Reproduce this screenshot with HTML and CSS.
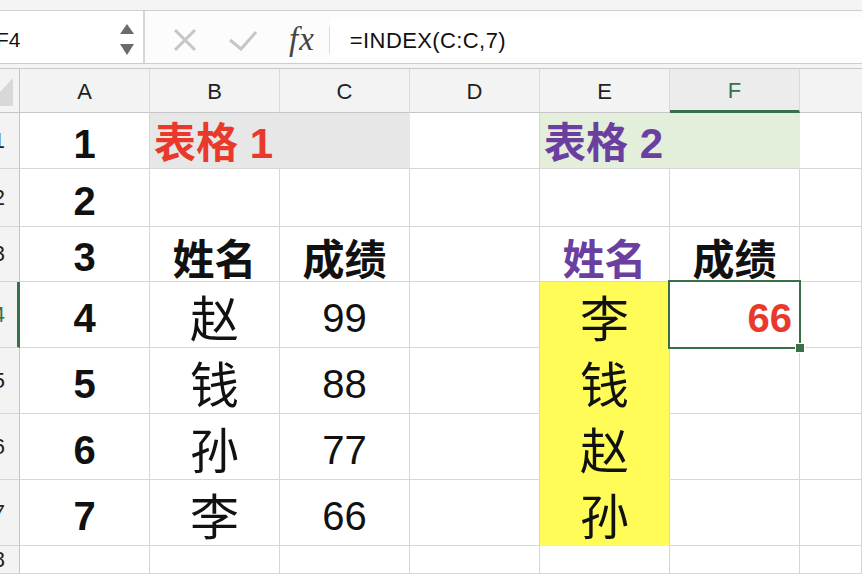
FILE: index.html
```html
<!DOCTYPE html>
<html lang="zh-cn">
<head>
    <meta charset="UTF-8">
    <meta name="viewport" content="width=device-width, initial-scale=1.0">
    <title>INDEX 示例</title>
    <link rel="stylesheet" href="styles.css">
</head>
<body>
    <div class="toolbar-strip"></div>

    <div class="formula-bar">
        <div class="name-box">
            <span class="cell-ref">F4</span>
            <svg class="spinner" width="16" height="33" viewBox="0 0 16 33">
                <polygon points="1,11 8,1 15,11" fill="#6b6b6b"/>
                <polygon points="1,21 15,21 8,32" fill="#6b6b6b"/>
            </svg>
        </div>
        <div class="fb-tools">
            <svg class="icon-cancel" width="24" height="22" viewBox="0 0 24 22">
                <path d="M2 1 L22 21 M22 1 L2 21" stroke="#c6c6c6" stroke-width="3" fill="none"/>
            </svg>
            <svg class="icon-enter" width="30" height="22" viewBox="0 0 30 22">
                <path d="M2 11 L13 20 L28 3" stroke="#c6c6c6" stroke-width="3" fill="none"/>
            </svg>
            <span class="fx">fx</span>
            <span class="fb-sep"></span>
        </div>
        <div class="formula">=INDEX(C:C,7)</div>
    </div>
    <div class="bar-gap"></div>

    <div class="sheet">
        <!-- cabeçalho de colunas -->
        <div class="corner">
            <svg width="19" height="43" viewBox="0 0 19 43">
                <polygon points="13,9 13,37 0,37 0,23" fill="#d8d8d8"/>
            </svg>
        </div>
        <div class="ch">A</div>
        <div class="ch">B</div>
        <div class="ch">C</div>
        <div class="ch">D</div>
        <div class="ch">E</div>
        <div class="ch ch-active">F</div>
        <div class="ch ch-last"></div>

        <!-- linha 1 -->
        <div class="rh"><span>1</span></div>
        <div class="c num">1</div>
        <div class="c span2 fill-gray title red">表格 1</div>
        <div class="c"></div>
        <div class="c span2 fill-green title purple">表格 2</div>
        <div class="c"></div>

        <!-- linha 2 -->
        <div class="rh"><span>2</span></div>
        <div class="c num">2</div>
        <div class="c"></div>
        <div class="c"></div>
        <div class="c"></div>
        <div class="c"></div>
        <div class="c"></div>
        <div class="c"></div>

        <!-- linha 3 -->
        <div class="rh"><span>3</span></div>
        <div class="c num">3</div>
        <div class="c head">姓名</div>
        <div class="c head">成绩</div>
        <div class="c"></div>
        <div class="c head purple">姓名</div>
        <div class="c head">成绩</div>
        <div class="c"></div>

        <!-- linha 4 -->
        <div class="rh rh-active"><span>4</span></div>
        <div class="c num">4</div>
        <div class="c name">赵</div>
        <div class="c score">99</div>
        <div class="c"></div>
        <div class="c name fill-yellow">李</div>
        <div class="c result selected">66</div>
        <div class="c"></div>

        <!-- linha 5 -->
        <div class="rh"><span>5</span></div>
        <div class="c num">5</div>
        <div class="c name">钱</div>
        <div class="c score">88</div>
        <div class="c"></div>
        <div class="c name fill-yellow">钱</div>
        <div class="c"></div>
        <div class="c"></div>

        <!-- linha 6 -->
        <div class="rh"><span>6</span></div>
        <div class="c num">6</div>
        <div class="c name">孙</div>
        <div class="c score">77</div>
        <div class="c"></div>
        <div class="c name fill-yellow">赵</div>
        <div class="c"></div>
        <div class="c"></div>

        <!-- linha 7 -->
        <div class="rh"><span>7</span></div>
        <div class="c num">7</div>
        <div class="c name">李</div>
        <div class="c score">66</div>
        <div class="c"></div>
        <div class="c name fill-yellow">孙</div>
        <div class="c"></div>
        <div class="c"></div>

        <!-- linha 8 -->
        <div class="rh"><span>8</span></div>
        <div class="c"></div>
        <div class="c"></div>
        <div class="c"></div>
        <div class="c"></div>
        <div class="c"></div>
        <div class="c"></div>
        <div class="c"></div>
    </div>
</body>
</html>
```

FILE: styles.css
```css
* {
    box-sizing: border-box;
}
body {
    margin: 0;
    padding: 0;
    background-color: #fff;
    font-family: "Liberation Sans", "Noto Sans CJK SC", sans-serif;
    color: #111;
    overflow: hidden;
}
.toolbar-strip {
    height: 11px;
    background-color: #f4f4f4;
    border-bottom: 1px solid #cfcfcf;
}
.formula-bar {
    display: flex;
    height: 53px;
    background-color: #fcfcfc;
    border-bottom: 1px solid #cdcdcd;
}
.name-box {
    width: 145px;
    display: flex;
    align-items: center;
    justify-content: space-between;
    border-right: 2px solid #d6d6d6;
    overflow: hidden;
    background-color: #fff;
}
.cell-ref {
    margin-left: -4px;
    padding-top: 5px;
    font-size: 21px;
    color: #111;
}
.spinner {
    margin-right: 8px;
    margin-top: 4px;
}
.fb-tools {
    display: flex;
    align-items: center;
    padding-left: 28px;
    padding-top: 5px;
}
.icon-enter {
    margin-left: 31px;
}
.fx {
    margin-left: 31px;
    font-family: "Liberation Serif", serif;
    font-style: italic;
    font-size: 33px;
    letter-spacing: 1px;
    color: #444;
}
.fb-sep {
    width: 1px;
    height: 28px;
    margin-left: 14px;
    background-color: #dadada;
}
.formula {
    flex: 1;
    display: flex;
    align-items: center;
    padding-left: 20px;
    padding-top: 5px;
    margin: 8px 0 6px;
    background-color: #fff;
    font-size: 22px;
    letter-spacing: 0.4px;
    color: #111;
}
.bar-gap {
    height: 5px;
    background-color: #f4f4f4;
    border-bottom: 1px solid #c9c9c9;
}

/* grade da planilha */
.sheet {
    display: grid;
    grid-template-columns: 20px repeat(6, 130px) 1fr;
    grid-template-rows: 44px 56px 58px 55px 66px 66px 66px 66px 1fr;
    height: 505px;
}
.corner {
    background-color: #f3f3f3;
    border-right: 1px solid #c6c6c6;
    border-bottom: 1px solid #c6c6c6;
}
.corner svg {
    display: block;
}
.ch {
    display: flex;
    align-items: center;
    justify-content: center;
    padding-top: 3px;
    background-color: #f3f3f3;
    border-right: 1px solid #dadada;
    border-bottom: 1px solid #c6c6c6;
    font-size: 22px;
    color: #222;
}
.ch-active {
    background-color: #ececec;
    color: #3a7047;
    border-bottom: 3px solid #3a7047;
}
.ch-last {
    border-right: none;
}
.rh {
    display: flex;
    align-items: center;
    justify-content: flex-end;
    padding-right: 14px;
    overflow: hidden;
    background-color: #f3f3f3;
    border-right: 1px solid #c6c6c6;
    border-bottom: 1px solid #d6d6d6;
    font-size: 22px;
    color: #222;
}
.rh span {
    flex-shrink: 0;
}
.rh-active {
    border-right: 3px solid #3a7047;
    padding-right: 12px;
    color: #3a7047;
}
.c {
    display: flex;
    align-items: center;
    justify-content: center;
    padding-top: 6px;
    border-right: 1px solid #d6d6d6;
    border-bottom: 1px solid #d6d6d6;
    font-size: 40px;
    line-height: 1;
    white-space: nowrap;
}
.span2 {
    grid-column: span 2;
}
.num {
    font-weight: bold;
}
.title {
    justify-content: flex-start;
    padding-left: 4px;
    font-weight: bold;
    font-size: 42px;
}
.head {
    font-family: "Noto Sans CJK SC", sans-serif;
    font-weight: bold;
    font-size: 42px;
}
.name {
    font-family: "Noto Sans CJK SC", sans-serif;
    font-size: 49px;
    padding-top: 2px;
}
.red {
    color: #e8392b;
}
.purple {
    color: #6b3fa0;
}
.fill-gray {
    background-color: #e7e7e7;
    border-right-color: #e7e7e7;
}
.fill-green {
    background-color: #e3eedb;
    border-right-color: #e3eedb;
}
.fill-yellow {
    background-color: #fffc57;
    border-bottom-color: #fffc57;
}
.result {
    justify-content: flex-end;
    padding-right: 7px;
    font-weight: bold;
    color: #e8392b;
}
.selected {
    position: relative;
}
.selected::after {
    content: "";
    position: absolute;
    top: -2px;
    left: -2px;
    right: -2px;
    bottom: -2px;
    border: 2px solid #3a7047;
}
.selected::before {
    content: "";
    position: absolute;
    right: -6px;
    bottom: -6px;
    width: 8px;
    height: 8px;
    background-color: #3a7047;
    border: 1px solid #fff;
    z-index: 1;
}
```
